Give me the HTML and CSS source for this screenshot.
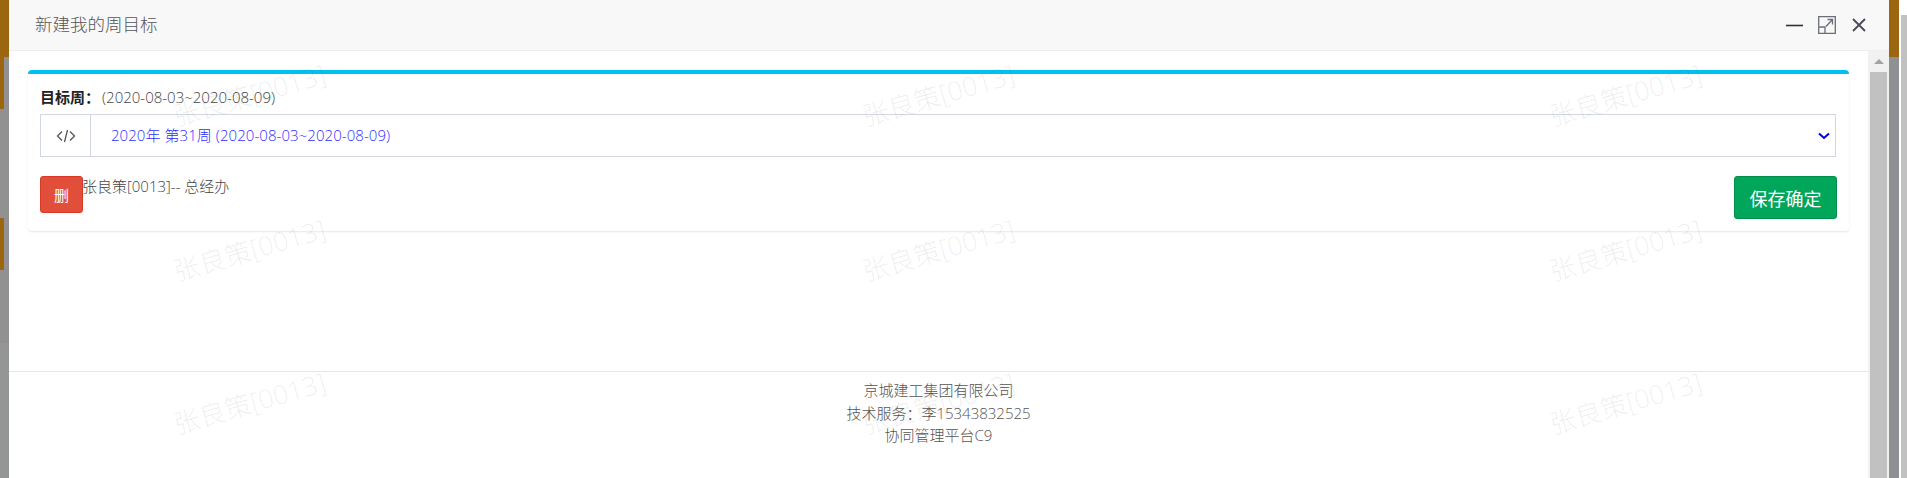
FILE: index.html
```html
<!DOCTYPE html>
<html lang="zh-CN">
<head>
<meta charset="UTF-8">
<meta name="viewport" content="width=device-width, initial-scale=1.0">
<title>新建我的周目标</title>
<link rel="stylesheet" href="styles.css">
</head>
<body>
<div class="backdrop-left">
    <div class="stripe-top"></div>
    <div class="stripe-mid"></div>
    <div class="stripe-low"></div>
    <div class="stripe-rest"></div>
</div>
<div class="dialog">
    <div class="dialog-header">
        <span class="dialog-title">新建我的周目标</span>
        <div class="dialog-tools">
            <svg width="17" height="18" viewBox="0 0 17 18"><path d="M0 9.500h17" stroke="#2f2f3f" stroke-width="1.600" fill="none"/></svg>
            <svg width="18" height="18" viewBox="0 0 18 18" fill="none" stroke="#6a6e78" stroke-width="1.300"><path d="M.7 10V.7h16.600v16.600H7"/><path d="M.7 11h6.300v6.300H.7z"/><path d="M8 10.500l6.500-7M9.500 3.500h5v5"/></svg>
            <svg width="16" height="16" viewBox="0 0 16 16" fill="none" stroke="#4a4a58" stroke-width="1.800"><path d="M2 2l12 12M14 2L2 14"/></svg>
        </div>
    </div>
    <div class="dialog-body">
        <div class="content">
            <div class="card">
                <div class="week-label"><b>目标周：</b>(2020-08-03~2020-08-09)</div>
                <div class="week-select">
                    <span class="select-addon">
                        <svg width="20" height="14" viewBox="0 0 20 14" fill="none" stroke="#555" stroke-width="1.300"><path d="M6 2.500L1.500 7 6 11.500M14 2.500L18.500 7 14 11.500M11.500 1l-3 12"/></svg>
                    </span>
                    <span class="select-value">2020年 第31周 (2020-08-03~2020-08-09)</span>
                    <svg class="select-arrow" width="12" height="8" viewBox="0 0 12 8" fill="none" stroke="#0000e0" stroke-width="2"><path d="M1 1.500l5 4.500 5-4.500"/></svg>
                </div>
                <div class="card-row">
                    <button class="btn-delete" type="button">删</button>
                    <span class="person">张良策[0013]-- 总经办</span>
                    <button class="btn-save" type="button">保存确定</button>
                </div>
            </div>
            <div class="footer">
                <div>京城建工集团有限公司</div>
                <div>技术服务：李15343832525</div>
                <div>协同管理平台C9</div>
            </div>
        </div>
        <div class="scrollbar">
            <div class="scroll-up"></div>
            <div class="scroll-thumb"></div>
        </div>
    </div>
</div>
<div class="backdrop-right">
    <div class="backdrop-strip"><div class="strip-orange"></div></div>
    <div class="page-scroll"></div>
</div>

<div class="watermark wm-1">张良策[0013]</div>
<div class="watermark wm-2">张良策[0013]</div>
<div class="watermark wm-3">张良策[0013]</div>
<div class="watermark wm-4">张良策[0013]</div>
<div class="watermark wm-5">张良策[0013]</div>
<div class="watermark wm-6">张良策[0013]</div>
<div class="watermark wm-7">张良策[0013]</div>
<div class="watermark wm-8">张良策[0013]</div>
<div class="watermark wm-9">张良策[0013]</div>
</body>
</html>
```

FILE: styles.css
```css
html, body {
    height: 100%;
}
body {
    margin: 0;
    display: flex;
    overflow: hidden;
    font-family: "Open Sans", "Noto Sans CJK SC", sans-serif;
    font-size: 15px;
    font-weight: 300;
    color: #333;
    background-color: #fff;
}
.backdrop-left {
    width: 9px;
    display: flex;
    flex-direction: column;
    background-color: #919191;
}
.stripe-top {
    height: 57px;
    background-color: #9c6610;
}
.stripe-mid {
    width: 4px;
    height: 52px;
    background-color: #9c6610;
}
.stripe-low {
    width: 4px;
    height: 52px;
    margin-top: 109px;
    background-color: #9c6610;
}
.stripe-rest {
    flex: 1;
    margin-top: 73px;
    background-color: #949696;
}
.dialog {
    flex: 1;
    display: flex;
    flex-direction: column;
    min-width: 0;
}
.dialog-header {
    height: 50px;
    display: flex;
    align-items: center;
    justify-content: space-between;
    padding: 0 22px 0 26px;
    background-color: #f8f8f8;
    border-bottom: 1px solid #eee;
}
.dialog-title {
    font-size: 17.500px;
    margin-top: -4px;
    color: #555;
}
.dialog-tools {
    display: flex;
    align-items: center;
    gap: 15px;
}
.dialog-body {
    flex: 1;
    display: flex;
    min-height: 0;
}
.content {
    flex: 1;
    min-width: 0;
    padding-top: 19px;
}
.card {
    margin: 0 19px;
    height: 161px;
    box-sizing: border-box;
    padding: 13px 13px 0 12px;
    border-top: 4px solid #00c0ef;
    border-radius: 4px;
    box-shadow: 0 1px 2px rgba(0, 0, 0, .1);
}
.week-label {
    height: 20px;
    line-height: 20px;
    color: #444;
}
.week-label b {
    font-weight: 700;
    color: #222;
    margin-right: 2px;
}
.week-select {
    height: 43px;
    margin-top: 7px;
    display: flex;
    align-items: center;
    box-sizing: border-box;
    border: 1px solid #d2d6e2;
}
.select-addon {
    width: 49px;
    height: 100%;
    display: flex;
    align-items: center;
    justify-content: center;
    border-right: 1px solid #d2d6e2;
}
.select-value {
    flex: 1;
    padding-left: 20px;
    margin-top: -2px;
    letter-spacing: .06px;
    color: #2f2fff;
}
.select-arrow {
    margin-right: 5px;
}
.card-row {
    display: flex;
    align-items: flex-start;
    margin-top: 19px;
}
.btn-delete {
    width: 43px;
    height: 37px;
    padding: 0;
    font-family: inherit;
    font-size: 15px;
    font-weight: 400;
    color: #fff;
    background-color: #e14f3a;
    border: 1px solid #d73925;
    border-radius: 3px;
}
.person {
    flex: 1;
    margin-left: -1px;
    line-height: 20px;
    color: #444;
}
.btn-save {
    width: 103px;
    height: 43px;
    padding: 0;
    font-family: inherit;
    font-size: 18px;
    font-weight: 400;
    color: #fff;
    background-color: #00a65a;
    border: 1px solid #008d4c;
    border-radius: 3px;
    margin-right: -1px;
}
.footer {
    margin-top: 140px;
    padding-top: 7px;
    border-top: 1px solid #e6e6e6;
    text-align: center;
    line-height: 22.500px;
    color: #555;
}
.scrollbar {
    width: 21px;
    display: flex;
    flex-direction: column;
    align-items: center;
    background-color: #f1f1f1;
}
.scroll-up {
    height: 21px;
    width: 17px;
    position: relative;
}
.scroll-up::before {
    content: "";
    position: absolute;
    left: 4px;
    top: 8px;
    border: 5px solid transparent;
    border-top: 0;
    border-bottom-color: #a3a3a3;
}
.scroll-thumb {
    flex: 1;
    width: 17px;
    background-color: #c1c1c1;
}
.backdrop-right {
    width: 18px;
    display: flex;
}
.backdrop-strip {
    width: 10px;
    background-color: #8e9093;
}
.strip-orange {
    height: 57px;
    background-color: #9c6610;
}
.page-scroll {
    width: 6px;
    margin-left: 2px;
    margin-top: 15px;
    background-color: #c1c1c1;
}
.watermark {
    position: absolute;
    font-size: 26.500px;
    line-height: 30px;
    white-space: nowrap;
    color: rgba(0, 0, 0, .075);
    transform: rotate(-16deg);
    pointer-events: none;
}
.wm-1 { left: 171px; top: 80px; }
.wm-2 { left: 860px; top: 80px; }
.wm-3 { left: 1547px; top: 80px; }
.wm-4 { left: 171px; top: 235px; }
.wm-5 { left: 860px; top: 235px; }
.wm-6 { left: 1547px; top: 235px; }
.wm-7 { left: 171px; top: 388px; }
.wm-8 { left: 860px; top: 388px; }
.wm-9 { left: 1547px; top: 388px; }
```
